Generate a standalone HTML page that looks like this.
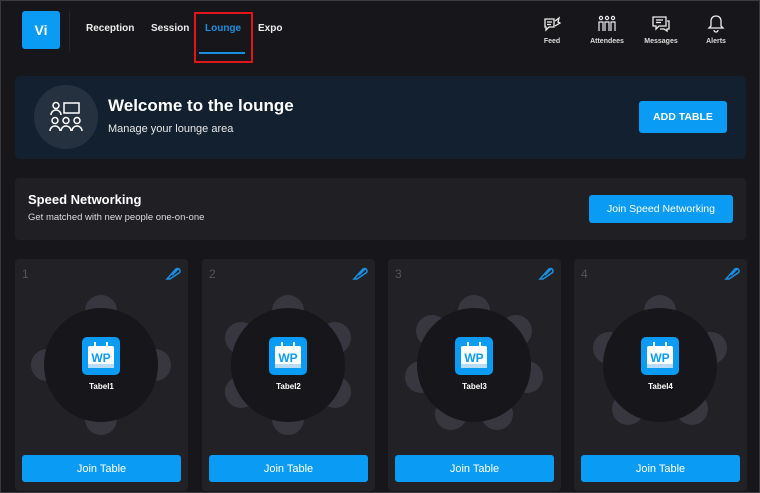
<!DOCTYPE html>
<html><head><meta charset="utf-8"><style>
*{box-sizing:border-box;margin:0;padding:0}
body{width:760px;height:493px;background:#17171b;font-family:"Liberation Sans",sans-serif;color:#fff;position:relative;overflow:hidden;border:1px solid #3a3a3e}
.abs{position:absolute}
.logo{left:21px;top:10px;width:38px;height:38px;background:#0a9cf5;border-radius:3px;font-weight:bold;font-size:14px;display:flex;align-items:center;justify-content:center}
.sep{left:68px;top:10px;width:1px;height:40px;background:#26262b}
.nav{top:22px;font-size:10px;font-weight:bold;color:#eee}
.ico{top:13px;width:60px;text-align:center;font-size:7px;font-weight:bold;color:#ddd}
.ico svg{display:block;margin:0 auto 4px}
.banner{left:14px;top:75px;width:731px;height:83px;background:#13202f;border-radius:5px}
.btn{background:#0a9cf5;border-radius:3px;display:flex;align-items:center;justify-content:center;color:#fff}
.speed{left:14px;top:177px;width:731px;height:62px;background:#1f1f24;border-radius:4px}
.card{top:258px;width:173px;height:232px;background:#212126;border-radius:4px}
.num{position:absolute;left:7px;top:8px;font-size:12px;color:#555}
.card svg.t{position:absolute;left:0;top:30px}
.wp{position:absolute;left:67px;top:78px;width:38px;height:38px;background:#0a9cf5;border-radius:5px}
.lbl{position:absolute;left:0;width:173px;top:123px;text-align:center;font-size:8px;font-weight:bold}
.jb{position:absolute;left:7px;top:196px;width:159px;height:27px;font-size:11px}
.pen{position:absolute;right:7px;top:6px}
</style></head><body>
<div class="abs logo">Vi</div>
<div class="abs sep"></div>
<div class="abs nav" style="left:85px">Reception</div>
<div class="abs nav" style="left:150px">Session</div>
<div class="abs nav" style="left:204px;color:#1a8fe0">Lounge</div>
<div class="abs" style="left:198px;top:51px;width:46px;height:2px;background:#1a8fe0"></div>
<div class="abs" style="left:193px;top:11px;width:59px;height:51px;border:2px solid #e0161a"></div>
<div class="abs nav" style="left:257px">Expo</div>

<div class="abs ico" style="left:521px"><svg width="20" height="20" viewBox="0 0 20 20" fill="none" stroke="#eee" stroke-width="1.3"><path d="M3 5h9v8H7l-3 3v-3H3z"/><path d="M5 8h5M5 10.5h4"/><path d="M13 7l4-3-1 4 2 1-5 3"/></svg>Feed</div>
<div class="abs ico" style="left:576px"><svg width="20" height="20" viewBox="0 0 20 20" fill="none" stroke="#eee" stroke-width="1.2"><circle cx="4" cy="4" r="1.6"/><circle cx="10" cy="4" r="1.6"/><circle cx="16" cy="4" r="1.6"/><path d="M2 17V8h4v9M8 17V8h4v9M14 17V8h4v9"/></svg>Attendees</div>
<div class="abs ico" style="left:630px"><svg width="20" height="20" viewBox="0 0 20 20" fill="none" stroke="#eee" stroke-width="1.3"><path d="M2 3h13v9H8l-3 3v-3H2z"/><path d="M5 6h7M5 8.5h5"/><path d="M16 7h2v8h-2v2l-3-2h-4"/></svg>Messages</div>
<div class="abs ico" style="left:685px"><svg width="20" height="20" viewBox="0 0 20 20" fill="none" stroke="#eee" stroke-width="1.3"><path d="M10 2c-3 0-5 2-5 5v5l-2 2h14l-2-2V7c0-3-2-5-5-5z"/><path d="M8 16a2 2 0 0 0 4 0"/></svg>Alerts</div>

<div class="abs banner"></div>
<div class="abs" style="left:33px;top:84px;width:64px;height:64px;border-radius:50%;background:#263140"></div>
<svg class="abs" style="left:48px;top:100px" width="34" height="32" viewBox="0 0 34 32" fill="none" stroke="#fff" stroke-width="1.5"><circle cx="7" cy="4.5" r="3"/><path d="M2 14a5 5 0 0 1 10 0"/><rect x="15" y="2" width="15" height="10"/><circle cx="6" cy="19.5" r="3"/><circle cx="17" cy="19.5" r="3"/><circle cx="28" cy="19.5" r="3"/><path d="M1 30a5 5 0 0 1 10 0M12 30a5 5 0 0 1 10 0M23 30a5 5 0 0 1 10 0"/></svg>
<div class="abs" style="left:107px;top:95px;font-size:17px;font-weight:bold">Welcome to the lounge</div>
<div class="abs" style="left:107px;top:122px;font-size:11px;color:#e8e8e8">Manage your lounge area</div>
<div class="abs btn" style="left:638px;top:100px;width:88px;height:32px;font-size:10.5px;font-weight:bold">ADD TABLE</div>

<div class="abs speed"></div>
<div class="abs" style="left:27px;top:191px;font-size:13px;font-weight:bold">Speed Networking</div>
<div class="abs" style="left:27px;top:211px;font-size:9.5px;color:#ddd">Get matched with new people one-on-one</div>
<div class="abs btn" style="left:588px;top:194px;width:144px;height:28px;font-size:10.5px">Join Speed Networking</div>

<div class="abs card" style="left:14px"><div class="num">1</div>
<svg class="pen" width="16" height="16" viewBox="0 0 16 16" fill="none" stroke="#1a8fe0" stroke-width="1.6"><path d="M2 14l9-10a2.5 2.5 0 0 1 3.5 3.5L5 14zM2 14l2-1M7 10l6-6"/></svg>
<svg class="t" width="173" height="150"><g fill="#38373f"><circle cx="86" cy="22" r="16"/><circle cx="86" cy="130" r="16"/><circle cx="32" cy="76" r="16"/><circle cx="140" cy="76" r="16"/></g><circle cx="86" cy="76" r="57" fill="#17171b"/></svg>
<div class="wp"><svg width="38" height="38"><rect x="6" y="9" width="26" height="22" rx="2" fill="#fff"/><rect x="6" y="27" width="26" height="4" fill="#b8dcf8"/><path d="M13 5v7M25 5v7" stroke="#fff" stroke-width="2"/><text x="19" y="25" text-anchor="middle" font-size="12" font-weight="bold" fill="#0a9cf5" font-family="Liberation Sans">WP</text></svg></div>
<div class="lbl">Tabel1</div><div class="jb btn">Join Table</div></div>

<div class="abs card" style="left:201px"><div class="num">2</div>
<svg class="pen" width="16" height="16" viewBox="0 0 16 16" fill="none" stroke="#1a8fe0" stroke-width="1.6"><path d="M2 14l9-10a2.5 2.5 0 0 1 3.5 3.5L5 14zM2 14l2-1M7 10l6-6"/></svg>
<svg class="t" width="173" height="150"><g fill="#38373f" transform="translate(86,76)"><circle cx="0" cy="-54" r="16"/><circle cx="0" cy="54" r="16"/><circle cx="-47" cy="-27" r="16"/><circle cx="47" cy="-27" r="16"/><circle cx="-47" cy="27" r="16"/><circle cx="47" cy="27" r="16"/></g><circle cx="86" cy="76" r="57" fill="#17171b"/></svg>
<div class="wp"><svg width="38" height="38"><rect x="6" y="9" width="26" height="22" rx="2" fill="#fff"/><rect x="6" y="27" width="26" height="4" fill="#b8dcf8"/><path d="M13 5v7M25 5v7" stroke="#fff" stroke-width="2"/><text x="19" y="25" text-anchor="middle" font-size="12" font-weight="bold" fill="#0a9cf5" font-family="Liberation Sans">WP</text></svg></div>
<div class="lbl">Tabel2</div><div class="jb btn">Join Table</div></div>

<div class="abs card" style="left:387px"><div class="num">3</div>
<svg class="pen" width="16" height="16" viewBox="0 0 16 16" fill="none" stroke="#1a8fe0" stroke-width="1.6"><path d="M2 14l9-10a2.5 2.5 0 0 1 3.5 3.5L5 14zM2 14l2-1M7 10l6-6"/></svg>
<svg class="t" width="173" height="150"><g fill="#38373f" transform="translate(86,76)"><circle cx="0" cy="-54" r="16"/><circle cx="42" cy="-34" r="16"/><circle cx="53" cy="12" r="16"/><circle cx="23" cy="49" r="16"/><circle cx="-23" cy="49" r="16"/><circle cx="-53" cy="12" r="16"/><circle cx="-42" cy="-34" r="16"/></g><circle cx="86" cy="76" r="57" fill="#17171b"/></svg>
<div class="wp"><svg width="38" height="38"><rect x="6" y="9" width="26" height="22" rx="2" fill="#fff"/><rect x="6" y="27" width="26" height="4" fill="#b8dcf8"/><path d="M13 5v7M25 5v7" stroke="#fff" stroke-width="2"/><text x="19" y="25" text-anchor="middle" font-size="12" font-weight="bold" fill="#0a9cf5" font-family="Liberation Sans">WP</text></svg></div>
<div class="lbl">Tabel3</div><div class="jb btn">Join Table</div></div>

<div class="abs card" style="left:573px"><div class="num">4</div>
<svg class="pen" width="16" height="16" viewBox="0 0 16 16" fill="none" stroke="#1a8fe0" stroke-width="1.6"><path d="M2 14l9-10a2.5 2.5 0 0 1 3.5 3.5L5 14zM2 14l2-1M7 10l6-6"/></svg>
<svg class="t" width="173" height="150"><g fill="#38373f" transform="translate(86,76)"><circle cx="0" cy="-54" r="16"/><circle cx="51" cy="-17" r="16"/><circle cx="32" cy="44" r="16"/><circle cx="-32" cy="44" r="16"/><circle cx="-51" cy="-17" r="16"/></g><circle cx="86" cy="76" r="57" fill="#17171b"/></svg>
<div class="wp"><svg width="38" height="38"><rect x="6" y="9" width="26" height="22" rx="2" fill="#fff"/><rect x="6" y="27" width="26" height="4" fill="#b8dcf8"/><path d="M13 5v7M25 5v7" stroke="#fff" stroke-width="2"/><text x="19" y="25" text-anchor="middle" font-size="12" font-weight="bold" fill="#0a9cf5" font-family="Liberation Sans">WP</text></svg></div>
<div class="lbl">Tabel4</div><div class="jb btn">Join Table</div></div>
</body></html>
